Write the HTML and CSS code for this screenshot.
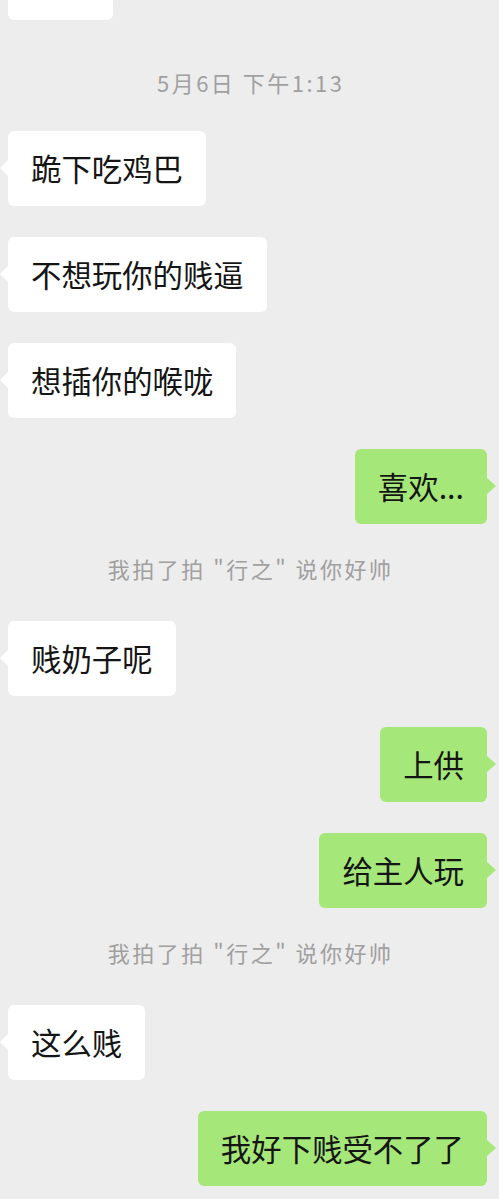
FILE: index.html
```html
<!DOCTYPE html>
<html lang="zh-CN">
<head>
<meta charset="utf-8">
<link rel="stylesheet" href="styles.css">
</head>
<body>
<div class="chat">
  <div class="row left"><div class="partial"></div></div>
  <div class="time">5月6日 下午1:13</div>
  <div class="row left"><div class="bubble">跪下吃鸡巴</div></div>
  <div class="row left"><div class="bubble">不想玩你的贱逼</div></div>
  <div class="row left"><div class="bubble">想插你的喉咙</div></div>
  <div class="row right"><div class="bubble">喜欢...</div></div>
  <div class="sys">我拍了拍 "行之" 说你好帅</div>
  <div class="row left"><div class="bubble">贱奶子呢</div></div>
  <div class="row right"><div class="bubble">上供</div></div>
  <div class="row right"><div class="bubble">给主人玩</div></div>
  <div class="sys">我拍了拍 "行之" 说你好帅</div>
  <div class="row left"><div class="bubble">这么贱</div></div>
  <div class="row right"><div class="bubble">我好下贱受不了了</div></div>
</div>
</body>
</html>
```
FILE: styles.css
```css
html, body {
  margin: 0;
  padding: 0;
  background: #ededed;
}
body {
  width: 499px;
  height: 1199px;
  overflow: hidden;
  font-family: "Noto Sans CJK SC", "Noto Sans", sans-serif;
}
.chat {
  display: flex;
  flex-direction: column;
}
.row {
  display: flex;
  margin-bottom: 31px;
}
.row.left {
  justify-content: flex-start;
  padding-left: 8px;
}
.row.right {
  justify-content: flex-end;
  padding-right: 12px;
}
.partial {
  width: 105px;
  height: 20px;
  background: #ffffff;
  border-radius: 0 0 6px 6px;
}
.row.left:first-child {
  margin-bottom: 0;
}
.bubble {
  position: relative;
  height: 75px;
  line-height: 75px;
  padding: 0 23px;
  font-size: 30.4px;
  color: #151515;
  border-radius: 6px;
  white-space: nowrap;
}
.left .bubble {
  background: #ffffff;
}
.right .bubble {
  background: #a6e779;
}
.left .bubble::before {
  content: "";
  position: absolute;
  left: -8px;
  top: 29px;
  border-style: solid;
  border-width: 8px 8px 8px 0;
  border-color: transparent #ffffff transparent transparent;
}
.right .bubble::after {
  content: "";
  position: absolute;
  right: -9px;
  top: 29px;
  border-style: solid;
  border-width: 8px 0 8px 9px;
  border-color: transparent transparent transparent #a6e779;
}
.time, .sys {
  text-align: center;
  color: #a0a0a0;
  font-size: 22px;
  letter-spacing: 2.5px;
  padding-left: 2.5px;
  line-height: 30px;
  height: 30px;
}
.time {
  margin-top: 47px;
  margin-bottom: 34px;
}
.sys {
  margin-top: -2px;
  margin-bottom: 38px;
}
```
